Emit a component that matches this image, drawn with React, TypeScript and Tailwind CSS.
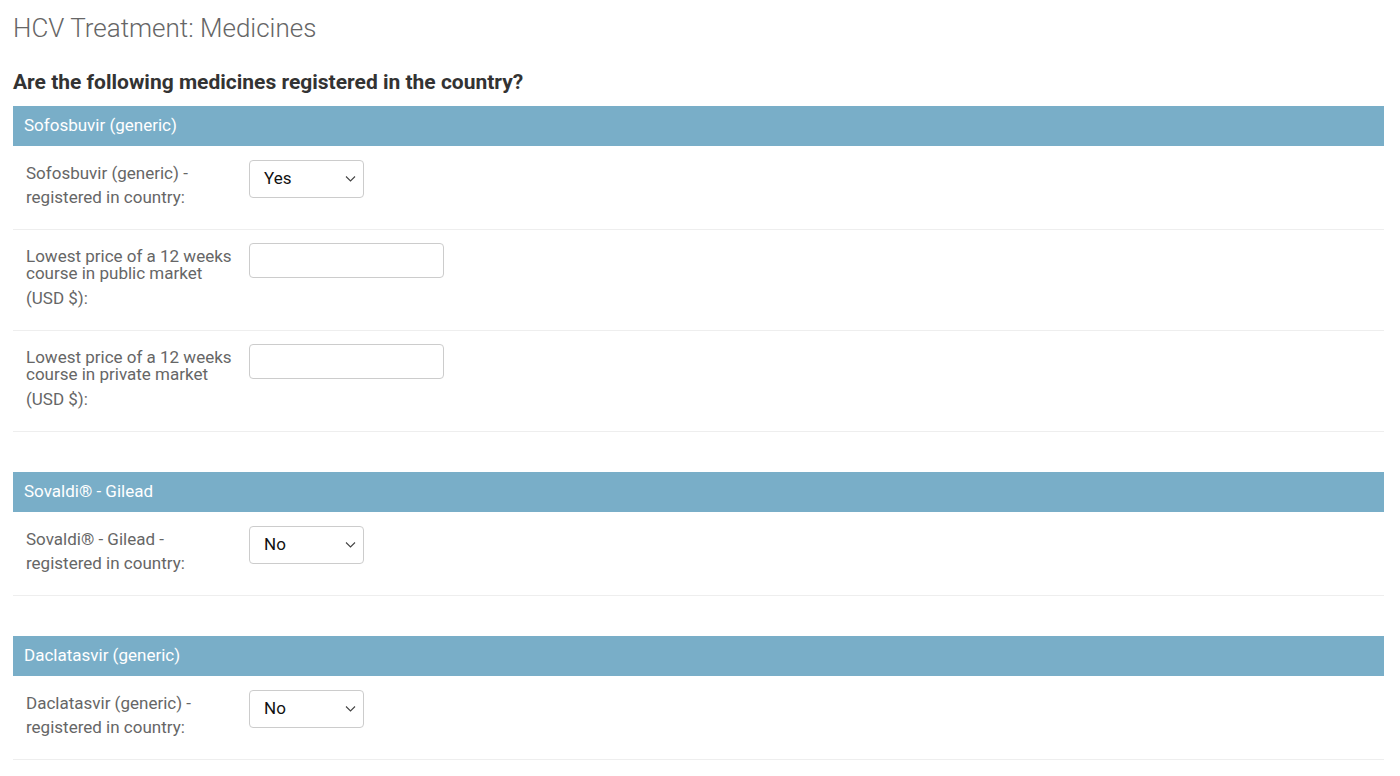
import type { ReactNode } from "react";

type Field =
  | { kind: "select"; label: string; value: string }
  | { kind: "price"; label: string };

type Section = { title: string; fields: Field[] };

const sections: Section[] = [
  {
    title: "Sofosbuvir (generic)",
    fields: [
      { kind: "select", label: "Sofosbuvir (generic) - registered in country:", value: "Yes" },
      { kind: "price", label: "Lowest price of a 12 weeks course in public market" },
      { kind: "price", label: "Lowest price of a 12 weeks course in private market" },
    ],
  },
  {
    title: "Sovaldi® - Gilead",
    fields: [{ kind: "select", label: "Sovaldi® - Gilead - registered in country:", value: "No" }],
  },
  {
    title: "Daclatasvir (generic)",
    fields: [{ kind: "select", label: "Daclatasvir (generic) - registered in country:", value: "No" }],
  },
];

const Chevron = () => (
  <svg width="11" height="7" viewBox="0 0 11 7" fill="none" className="absolute right-[7px] top-1/2 -translate-y-1/2">
    <path d="M1 1l4.5 4.5L10 1" stroke="#444" strokeWidth="1.1" />
  </svg>
);

// fake select, the native one renders differently per platform
const SelectBox = ({ value }: { value: string }) => (
  <div className="relative flex h-[38px] w-[115px] items-center rounded-[4px] border border-[#ccc] bg-white pl-[14px] text-[17px] text-[#111]">
    {value}
    <Chevron />
  </div>
);

const Row = ({ children, pad }: { children: ReactNode; pad: string }) => (
  <div className={`flex border-b border-[#eee] pl-[13px] ${pad}`}>{children}</div>
);

const FieldRow = ({ field }: { field: Field }) => {
  if (field.kind === "select") {
    return (
      <Row pad="pt-[14px] pb-[20px]">
        <label className="w-[223px] shrink-0 pt-[1px] pr-[20px] leading-[24px] text-[#666]">{field.label}</label>
        <SelectBox value={field.value} />
      </Row>
    );
  }
  return (
    <Row pad="pt-[13px] pb-[20px]">
      <label className="w-[223px] shrink-0 pt-[5px] pr-[4px] text-[#666]">
        <span className="block leading-[17px]">{field.label}</span>
        <span className="mt-[4px] block leading-[24px]">(USD $):</span>
      </label>
      <input
        type="text"
        className="h-[35px] w-[195px] rounded-[4px] border border-[#ccc] bg-white px-2 outline-none"
      />
    </Row>
  );
};

export default function App() {
  return (
    <div className="min-h-screen bg-white pl-[13px] pr-[16px] font-['Roboto',sans-serif] text-[17px] text-[#333]">
      <h1 className="pt-[13px] text-[26px] font-light leading-[30px] text-[#666]">HCV Treatment: Medicines</h1>
      <h2 className="mt-[27px] text-[21px] font-bold leading-[24px] text-[#333]">
        Are the following medicines registered in the country?
      </h2>
      <div className="mt-[12px] flex flex-col gap-[40px]">
        {sections.map((s) => (
          <fieldset key={s.title}>
            <div className="flex h-[40px] items-center bg-[#79aec8] pl-[11px] text-[17px] text-white">{s.title}</div>
            {s.fields.map((f, i) => (
              <FieldRow key={i} field={f} />
            ))}
          </fieldset>
        ))}
      </div>
    </div>
  );
}
